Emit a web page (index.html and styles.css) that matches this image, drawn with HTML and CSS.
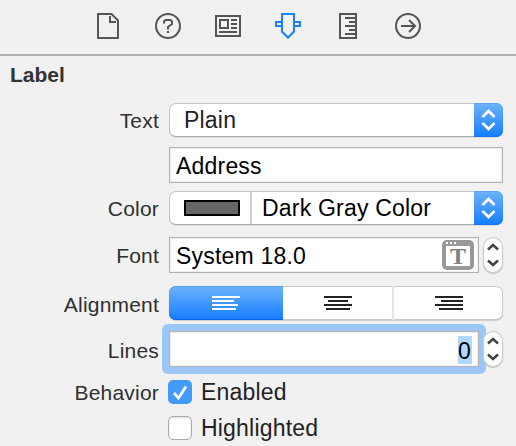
FILE: index.html
```html
<!DOCTYPE html>
<html lang="en">
<head>
<meta charset="utf-8">
<title>Attributes Inspector</title>
<link rel="stylesheet" href="styles.css">
</head>
<body>
<nav class="toolbar">
  <div class="tab"><svg width="26" height="26" viewBox="0 0 26 26"><path d="M3 1H16.5L23 7.5V25H3Z"/><path d="M15 3V9H21"/></svg></div>
  <div class="tab"><svg width="26" height="26" viewBox="0 0 26 26"><circle cx="13" cy="13" r="12"/><path d="M9 10.5V8.5L10.5 7H15.5L17 8.5V11L13 14V16.5M13 18V20"/></svg></div>
  <div class="tab"><svg width="26" height="26" viewBox="0 0 26 26"><path d="M1 3H25V23H1ZM5 7H13V15H5ZM16 7H22M16 11H22M16 15H22M4 19H22"/></svg></div>
  <div class="tab active"><svg width="26" height="26" viewBox="0 0 26 26"><path d="M7 1H19V18.5L13 24.5L7 18.5ZM7 9H1V13H7M19 9H25V13H19"/></svg></div>
  <div class="tab"><svg width="26" height="26" viewBox="0 0 26 26"><path d="M5 1H21V25H5ZM10 5H21M14 9H21M10 13H21M14 17H21M10 21H21"/></svg></div>
  <div class="tab"><svg width="26" height="26" viewBox="0 0 26 26"><circle cx="13" cy="13" r="12"/><path d="M6 13H19.5M14 7L20 13L14 19"/></svg></div>
</nav>
<main class="panel">
  <h1 class="title">Label</h1>
  <div class="row text-row">
    <span class="label">Text</span>
    <div class="popup"><span class="value plain">Plain</span><span class="arrows"><svg width="29" height="34" viewBox="0 0 29 34"><path d="M8.5 14L14.5 8L20.5 14M8.5 20L14.5 26L20.5 20"/></svg></span></div>
  </div>
  <div class="row address-row">
    <span class="label"></span>
    <div class="field">Address</div>
  </div>
  <div class="row color-row">
    <span class="label">Color</span>
    <div class="popup"><span class="well"><span class="swatch"></span></span><span class="value">Dark Gray Color</span><span class="arrows"><svg width="29" height="34" viewBox="0 0 29 34"><path d="M8.5 14L14.5 8L20.5 14M8.5 20L14.5 26L20.5 20"/></svg></span></div>
  </div>
  <div class="row font-row">
    <span class="label">Font</span>
    <div class="field"><span>System 18.0</span><svg class="font-icon" width="32" height="30" viewBox="0 0 32 30"><rect width="32" height="30" rx="5" fill="#999"/><path d="M4 6H28V26H4Z" fill="#fff"/><path d="M4 2H6V4H4ZM8 2H10V4H8ZM12 2H14V4H12Z" fill="#fff"/><text x="16" y="24" text-anchor="middle">T</text></svg></div>
    <div class="stepper"><svg width="20" height="36" viewBox="0 0 20 36"><path d="M5 12.5L10 8L15 12.5M5 23.5L10 28L15 23.5"/></svg></div>
  </div>
  <div class="row align-row">
    <span class="label">Alignment</span>
    <div class="segments">
      <span class="segment selected"><svg width="28" height="14" viewBox="0 0 28 14"><path d="M0 1H28M0 5H22M0 9H26M0 13H24"/></svg></span>
      <span class="segment"><svg width="28" height="14" viewBox="0 0 28 14"><path d="M0 1H28M4 5H24M0 9H28M2 13H26"/></svg></span>
      <span class="segment"><svg width="28" height="14" viewBox="0 0 28 14"><path d="M0 1H28M6 5H28M0 9H28M4 13H28"/></svg></span>
    </div>
  </div>
  <div class="row lines-row">
    <span class="label">Lines</span>
    <div class="field focused"><span class="selection">0</span></div>
    <div class="stepper"><svg width="20" height="36" viewBox="0 0 20 36"><path d="M5 12.5L10 8L15 12.5M5 23.5L10 28L15 23.5"/></svg></div>
  </div>
  <div class="row enabled-row">
    <span class="label">Behavior</span>
    <span class="check checked"><svg width="24" height="24" viewBox="0 0 24 24"><path d="M6 13L10.5 18L18 6.5"/></svg></span>
    <span class="check-label">Enabled</span>
  </div>
  <div class="row highlighted-row">
    <span class="label"></span>
    <span class="check"></span>
    <span class="check-label">Highlighted</span>
  </div>
</main>
</body>
</html>
```
FILE: styles.css
```css
* { box-sizing: border-box; }
body {
  margin: 0;
  width: 516px;
  height: 446px;
  overflow: hidden;
  background: #f1f1f1;
  color: #000;
  font: 23px/30px "Liberation Sans", Arial, sans-serif;
  letter-spacing: 0.2px;
}
svg { display: block; flex: none; fill: none; stroke-width: 2; }
.toolbar {
  display: flex;
  height: 56px;
  padding: 0 78px 2px;
  border-bottom: 2px solid #b1b1b1;
}
.tab {
  display: flex;
  width: 60px;
  align-items: center;
  justify-content: center;
}
.tab svg { stroke: #555; }
.tab.active svg { stroke: #1a82fb; }
.title {
  margin: 0;
  height: 47px;
  padding: 4px 0 0 10px;
  color: #333;
  font-size: 21px;
  letter-spacing: 0;
}
.row { display: flex; height: 36px; }
.text-row, .color-row, .align-row { height: 34px; }
.address-row { margin-top: 10px; }
.color-row { margin-top: 8px; }
.font-row { margin-top: 12px; }
.align-row { margin-top: 13px; }
.lines-row { margin-top: 11px; }
.enabled-row { height: 24px; margin-top: 13px; }
.highlighted-row { height: 24px; margin-top: 12px; }
.label {
  display: flex;
  align-items: center;
  justify-content: flex-end;
  width: 169px;
  padding: 2px 10px 0 0;
  color: #303030;
  font-size: 21px;
}
.align-row .label, .lines-row .label { padding-top: 3px; }
.popup {
  display: flex;
  width: 334px;
  align-items: center;
  background: #fff;
  border: 1px solid #c6c6c6;
  border-bottom-color: #aaa;
  border-radius: 7px;
  box-shadow: 0 1px 1px #ddd;
}
.value { flex: 1; padding-left: 10px; }
.value.plain { padding-left: 14px; color: #222; }
.arrows {
  width: 29px;
  height: 34px;
  margin: -1px;
  border-radius: 0 7px 7px 0;
  background: linear-gradient(#6db3fa, #147dff);
  box-shadow: inset 0 1px #5ba5ef, inset 0 -1px #1670f0;
}
.arrows svg { stroke: #fff; stroke-width: 2.7; }
.well {
  display: flex;
  width: 82px;
  height: 32px;
  align-items: center;
  padding-left: 14px;
  border-right: 2px solid #d0d0d0;
}
.swatch { width: 56px; height: 16px; border: 2px solid #000; background: #666; }
.field {
  display: flex;
  flex: none;
  width: 310px;
  align-items: center;
  justify-content: space-between;
  padding: 2px 4px 0 6px;
  border: 1px solid #b2b2b2;
  background: #fff;
  box-shadow: inset 0 0 0 1px #eee;
}
.address-row .field { width: 334px; }
.font-icon { margin-top: -2px; }
.font-icon text {
  fill: #808080;
  font: bold 24px "Liberation Serif", serif;
  letter-spacing: 0;
}
.stepper {
  position: relative;
  width: 20px;
  height: 36px;
  margin-left: 4px;
  border-radius: 10px;
  background: #fff;
  box-shadow: inset 0 0 0 1px #c8c8c8, 0 1px 1px #bbb;
}
.stepper svg { stroke: #444; stroke-width: 2.5; }
.segments {
  display: flex;
  width: 334px;
  border-radius: 7px;
  background: #fff;
  box-shadow: inset 0 0 0 1px #c9c9c9, inset 0 -1px #aaa, 0 1px 1px #ccc;
}
.segment {
  display: flex;
  flex: 1;
  align-items: center;
  justify-content: center;
}
.segment + .segment + .segment { border-left: 2px solid #e4e4e4; }
.segment svg { stroke: #222; }
.segment.selected {
  flex: 0 0 114px;
  border-radius: 7px 0 0 7px;
  background: linear-gradient(#6db3fa, #147dff);
  box-shadow: inset 0 1px #569feb, inset 0 -1px #0d63ee;
}
.segment.selected svg { stroke: #fff; }
.focused {
  position: relative;
  justify-content: flex-end;
  padding: 1px 5px 0;
  border-color: #b5b5b5;
}
.focused::before {
  content: "";
  position: absolute;
  z-index: -1;
  inset: -8px;
  border-radius: 6px;
  background: #9bc6f5;
}
.selection {
  width: 14px;
  height: 28px;
  padding-top: 1px;
  margin-right: 1px;
  background: #b2d7ff;
  line-height: 28px;
}
.check {
  width: 24px;
  height: 24px;
  margin-left: -1px;
  border: 1px solid #aaa;
  border-radius: 5px;
  background: #fff;
  box-shadow: inset 0 1px 2px #ddd;
}
.check.checked { border: 0; background: #429bf8; box-shadow: none; }
.check svg { stroke: #fff; stroke-width: 2.8; }
.check-label { padding-left: 9px; line-height: 25px; color: #222; }
```
